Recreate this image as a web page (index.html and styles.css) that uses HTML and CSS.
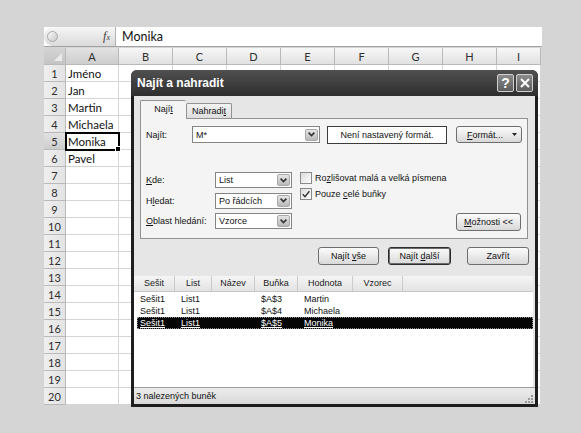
FILE: index.html
```html
<!DOCTYPE html>
<html>
<head>
    <meta charset="UTF-8">
    <title>Najít a nahradit</title>
    <link rel="stylesheet" href="styles.css">
</head>
<body>
    <div class="excel">
        <div class="formula-bar">
            <div class="name-box">
                <span class="knob"></span>
                <span class="fx">f<small>x</small></span>
            </div>
            <div class="formula">Monika</div>
        </div>

        <table class="sheet">
            <colgroup>
                <col class="c-head">
                <col class="c-a">
                <col span="7" class="c-mid">
                <col class="c-i">
            </colgroup>
            <tr class="head-row">
                <th class="corner"></th><th class="sel">A</th><th>B</th><th>C</th><th>D</th><th>E</th><th>F</th><th>G</th><th>H</th><th>I</th>
            </tr>
            <tr><th>1</th><td>Jméno</td><td></td><td></td><td></td><td></td><td></td><td></td><td></td><td></td></tr>
            <tr><th>2</th><td>Jan</td><td></td><td></td><td></td><td></td><td></td><td></td><td></td><td></td></tr>
            <tr><th>3</th><td>Martin</td><td></td><td></td><td></td><td></td><td></td><td></td><td></td><td></td></tr>
            <tr><th>4</th><td>Michaela</td><td></td><td></td><td></td><td></td><td></td><td></td><td></td><td></td></tr>
            <tr><th class="sel">5</th><td class="current-cell">Monika</td><td></td><td></td><td></td><td></td><td></td><td></td><td></td><td></td></tr>
            <tr><th>6</th><td>Pavel</td><td></td><td></td><td></td><td></td><td></td><td></td><td></td><td></td></tr>
            <tr><th>7</th><td></td><td></td><td></td><td></td><td></td><td></td><td></td><td></td><td></td></tr>
            <tr><th>8</th><td></td><td></td><td></td><td></td><td></td><td></td><td></td><td></td><td></td></tr>
            <tr><th>9</th><td></td><td></td><td></td><td></td><td></td><td></td><td></td><td></td><td></td></tr>
            <tr><th>10</th><td></td><td></td><td></td><td></td><td></td><td></td><td></td><td></td><td></td></tr>
            <tr><th>11</th><td></td><td></td><td></td><td></td><td></td><td></td><td></td><td></td><td></td></tr>
            <tr><th>12</th><td></td><td></td><td></td><td></td><td></td><td></td><td></td><td></td><td></td></tr>
            <tr><th>13</th><td></td><td></td><td></td><td></td><td></td><td></td><td></td><td></td><td></td></tr>
            <tr><th>14</th><td></td><td></td><td></td><td></td><td></td><td></td><td></td><td></td><td></td></tr>
            <tr><th>15</th><td></td><td></td><td></td><td></td><td></td><td></td><td></td><td></td><td></td></tr>
            <tr><th>16</th><td></td><td></td><td></td><td></td><td></td><td></td><td></td><td></td><td></td></tr>
            <tr><th>17</th><td></td><td></td><td></td><td></td><td></td><td></td><td></td><td></td><td></td></tr>
            <tr><th>18</th><td></td><td></td><td></td><td></td><td></td><td></td><td></td><td></td><td></td></tr>
            <tr><th>19</th><td></td><td></td><td></td><td></td><td></td><td></td><td></td><td></td><td></td></tr>
            <tr><th>20</th><td></td><td></td><td></td><td></td><td></td><td></td><td></td><td></td><td></td></tr>
        </table>

        <div class="dialog">
            <div class="title-bar">
                <span class="title">Najít a nahradit</span>
                <div class="title-buttons">
                    <span class="tbtn">?</span>
                    <span class="tbtn">
                        <svg width="10" height="10" viewBox="0 0 10 10"><path d="M1 1L9 9M9 1L1 9" stroke="#fff" stroke-width="2"/></svg>
                    </span>
                </div>
            </div>

            <div class="dialog-body">
                <div class="tabs">
                    <span class="tab current">Nají<u>t</u></span>
                    <span class="tab">Nahradi<u>t</u></span>
                </div>

                <div class="panel">
                    <div class="find-row">
                        <label class="find-label">Na<u>j</u>ít:</label>
                        <div class="combo find-input">
                            <span>M*</span>
                            <span class="arrow"><svg width="7" height="5" viewBox="0 0 7 5"><path d="M0.6 0.6L3.5 3.6L6.4 0.6" fill="none" stroke="#333" stroke-width="1.6"/></svg></span>
                        </div>
                        <div class="format-preview">Není nastavený formát.</div>
                        <button class="btn format-btn"><span><u>F</u>ormát...</span><svg width="5" height="3" viewBox="0 0 5 3"><path d="M0 0H5L2.5 3Z" fill="#222"/></svg></button>
                    </div>

                    <div class="options">
                        <div class="option-grid">
                            <label><u>K</u>de:</label>
                            <div class="combo">
                                <span>List</span>
                                <span class="arrow"><svg width="7" height="5" viewBox="0 0 7 5"><path d="M0.6 0.6L3.5 3.6L6.4 0.6" fill="none" stroke="#333" stroke-width="1.6"/></svg></span>
                            </div>
                            <label>H<u>l</u>edat:</label>
                            <div class="combo">
                                <span>Po řádcích</span>
                                <span class="arrow"><svg width="7" height="5" viewBox="0 0 7 5"><path d="M0.6 0.6L3.5 3.6L6.4 0.6" fill="none" stroke="#333" stroke-width="1.6"/></svg></span>
                            </div>
                            <label><u>O</u>blast hledání:</label>
                            <div class="combo">
                                <span>Vzorce</span>
                                <span class="arrow"><svg width="7" height="5" viewBox="0 0 7 5"><path d="M0.6 0.6L3.5 3.6L6.4 0.6" fill="none" stroke="#333" stroke-width="1.6"/></svg></span>
                            </div>
                        </div>

                        <div class="checks">
                            <label class="check"><span class="box"></span><span>Ro<u>z</u>lišovat malá a velká písmena</span></label>
                            <label class="check"><span class="box"><svg width="10" height="10" viewBox="0 0 10 10"><path d="M1.8 5.2L4 7.6L8.4 2.2" fill="none" stroke="#333" stroke-width="1.4"/></svg></span><span>Pouze <u>c</u>elé buňky</span></label>
                        </div>

                        <button class="btn options-btn"><u>M</u>ožnosti &lt;&lt;</button>
                    </div>
                </div>

                <div class="actions">
                    <button class="btn find-all">Najít <u>v</u>še</button>
                    <button class="btn find-next default">Najít <u>d</u>alší</button>
                    <button class="btn close-btn">Zavřít</button>
                </div>

                <div class="results">
                    <div class="results-head">
                        <span>Sešit</span><span>List</span><span>Název</span><span>Buňka</span><span>Hodnota</span><span>Vzorec</span><span></span>
                    </div>
                    <div class="result-row">
                        <span>Sešit1</span><span>List1</span><span></span><span>$A$3</span><span>Martin</span><span></span>
                    </div>
                    <div class="result-row">
                        <span>Sešit1</span><span>List1</span><span></span><span>$A$4</span><span>Michaela</span><span></span>
                    </div>
                    <div class="result-row selected">
                        <span>Sešit1</span><span>List1</span><span></span><span>$A$5</span><span>Monika</span><span></span>
                    </div>
                </div>

                <div class="status">
                    <span>3 nalezených buněk</span>
                    <svg class="grip" width="10" height="10" viewBox="0 0 10 10">
                        <rect x="7" y="1" width="2" height="2" fill="#9a9a9a"/>
                        <rect x="4" y="4" width="2" height="2" fill="#9a9a9a"/>
                        <rect x="7" y="4" width="2" height="2" fill="#9a9a9a"/>
                        <rect x="1" y="7" width="2" height="2" fill="#9a9a9a"/>
                        <rect x="4" y="7" width="2" height="2" fill="#9a9a9a"/>
                        <rect x="7" y="7" width="2" height="2" fill="#9a9a9a"/>
                    </svg>
                </div>
            </div>
        </div>
    </div>
</body>
</html>
```

FILE: styles.css
```css
body {
    width: 581px;
    height: 433px;
    margin: 0;
    overflow: hidden;
    background: #d5d5d5;
    font-family: "Liberation Sans", Arial, sans-serif;
}

.excel {
    position: relative;
    width: 498px;
    margin: 27px 0 0 44px;
    font-family: Lato, "Liberation Sans", sans-serif;
}

/* formula bar */

.formula-bar {
    display: flex;
    height: 19px;
    margin-bottom: 1px;
    background: #fff;
    border-bottom: 1px solid #a2a2a2;
}

.name-box {
    display: flex;
    align-items: center;
    justify-content: space-between;
    width: 72px;
    padding: 0 5px 0 3px;
    box-sizing: border-box;
    background: linear-gradient(#f6f6f6, #dadada);
    border-right: 1px solid #b0b0b0;
    border-radius: 9px 0 0 9px;
}

.knob {
    width: 9px;
    height: 9px;
    border-radius: 50%;
    border: 1px solid #a9a9a9;
    background: linear-gradient(135deg, #fafafa, #c8c8c8);
}

.fx {
    font-family: "Liberation Serif", serif;
    font-style: italic;
    font-size: 12px;
    color: #3a3a3a;
}

.fx small {
    font-size: 8px;
}

.formula {
    padding-left: 6px;
    font-size: 12.5px;
    line-height: 19px;
    color: #111;
}

/* sheet grid */

.sheet {
    width: 497px;
    table-layout: fixed;
    border-collapse: separate;
    border-spacing: 0;
    font-size: 11.5px;
    color: #111;
}

.c-head { width: 22px; }
.c-a { width: 53px; }
.c-mid { width: 54px; }
.c-i { width: 44px; }

.sheet tr {
    height: 17px;
}

.sheet th,
.sheet td {
    padding: 0;
    border-right: 1px solid #d6d6d6;
    border-bottom: 1px solid #d6d6d6;
    line-height: 15px;
    white-space: nowrap;
    overflow: hidden;
}

.sheet td {
    padding-left: 2px;
    background: #fff;
}

.sheet th {
    font-weight: normal;
    font-size: 11px;
    color: #2e2e2e;
    background: linear-gradient(90deg, #efefef, #e3e3e3);
    border-color: #b9b9b9;
}

.head-row th {
    background: linear-gradient(#f7f7f7, #e1e1e1);
}

.sheet th.sel {
    background: linear-gradient(#e2e2e2, #cdcdcd);
}

.head-row th.corner {
    position: relative;
    background: linear-gradient(#d4d4d4, #c4c4c4);
}

.corner::after {
    content: "";
    position: absolute;
    right: 3px;
    bottom: 3px;
    border-left: 8px solid transparent;
    border-bottom: 8px solid #ececec;
}

.sheet td.current-cell {
    position: relative;
    overflow: visible;
    outline: 2px solid #000;
    outline-offset: -1px;
}

.current-cell::after {
    content: "";
    position: absolute;
    right: -3px;
    bottom: -3px;
    width: 4px;
    height: 4px;
    background: #000;
    border: 1px solid #fff;
}

/* dialog */

.dialog {
    position: absolute;
    left: 87px;
    top: 43px;
    width: 407px;
    padding: 0 3px 3px;
    box-sizing: border-box;
    background: #1e1e1e;
    border-radius: 6px 6px 0 0;
    font-family: "Liberation Sans", Arial, sans-serif;
    font-size: 9px;
    color: #111;
}

.title-bar {
    display: flex;
    align-items: center;
    justify-content: space-between;
    height: 26px;
    margin: 0 -3px;
    padding: 0 5px 0 6px;
    background: linear-gradient(#505050, #2e2e2e);
    border-radius: 6px 6px 0 0;
}

.title {
    font-size: 12px;
    font-weight: bold;
    color: #fff;
}

.title-buttons {
    display: flex;
    gap: 2px;
}

.tbtn {
    display: flex;
    align-items: center;
    justify-content: center;
    width: 17px;
    height: 18px;
    box-sizing: border-box;
    border: 1px solid #cfcfcf;
    border-radius: 2px;
    background: linear-gradient(#8c8c8c, #5c5c5c);
    color: #fff;
    font-size: 14px;
    font-weight: bold;
}

.dialog-body {
    display: flex;
    flex-direction: column;
    height: 308px;
    background: #e6e6e6;
}

.tabs {
    display: flex;
    align-items: flex-end;
    height: 17px;
    padding: 5px 0 0 6px;
}

.tab {
    width: 46px;
    height: 15px;
    box-sizing: border-box;
    border: 1px solid #929292;
    border-bottom: none;
    border-radius: 2px 2px 0 0;
    background: linear-gradient(#f2f2f2, #dedede);
    text-align: center;
    line-height: 14px;
}

.tab.current {
    position: relative;
    z-index: 1;
    height: 19px;
    margin-bottom: -1px;
    border-right: none;
    background: #f4f4f4;
    line-height: 17px;
}

.panel {
    width: 388px;
    height: 121px;
    margin-left: 6px;
    padding: 7px 5px 0;
    box-sizing: border-box;
    background: #f4f4f4;
    border: 1px solid #929292;
}

.find-row {
    display: flex;
    align-items: center;
    height: 17px;
}

.find-label {
    width: 46px;
}

.combo {
    display: flex;
    align-items: center;
    justify-content: space-between;
    height: 16px;
    padding: 0 1px 0 3px;
    box-sizing: border-box;
    background: #fff;
    border: 1px solid #858585;
}

.find-input {
    width: 128px;
    height: 17px;
}

.arrow {
    display: flex;
    align-items: center;
    justify-content: center;
    width: 13px;
    height: 12px;
    box-sizing: border-box;
    border: 1px solid #a8a8a8;
    border-radius: 2px;
    background: linear-gradient(#e6e6e6, #b9b9b9);
}

.format-preview {
    width: 120px;
    height: 18px;
    margin-left: 7px;
    box-sizing: border-box;
    border: 1px solid #3c3c3c;
    background: #fff;
    text-align: center;
    line-height: 16px;
}

.btn {
    height: 18px;
    padding: 0;
    box-sizing: border-box;
    border: 1px solid #6e6e6e;
    border-radius: 3px;
    background: linear-gradient(#fbfbfb, #ececec 45%, #d8d8d8);
    font-family: inherit;
    font-size: 9px;
    color: #111;
}

.format-btn {
    display: flex;
    align-items: center;
    justify-content: space-between;
    width: 66px;
    height: 17px;
    margin-left: 9px;
    padding: 0 4px 0 10px;
}

.options {
    display: flex;
    margin-top: 29px;
}

.option-grid {
    display: grid;
    grid-template-columns: 69px 77px;
    grid-auto-rows: 16px;
    row-gap: 4.5px;
    align-items: center;
}

.checks {
    display: flex;
    flex-direction: column;
    gap: 4px;
    margin-left: 8px;
}

.check {
    display: flex;
    align-items: center;
    gap: 3px;
    height: 12px;
}

.box {
    display: flex;
    align-items: center;
    justify-content: center;
    width: 12px;
    height: 12px;
    box-sizing: border-box;
    border: 1px solid #8a8a8a;
    background: linear-gradient(135deg, #dcdcdc, #fdfdfd);
}

.options-btn {
    align-self: flex-end;
    width: 65px;
    margin: 0 1px -2px auto;
}

.actions {
    display: flex;
    justify-content: flex-end;
    height: 18px;
    margin-top: 8px;
    padding-right: 6px;
}

.find-all { width: 61px; }

.find-next {
    width: 63px;
    margin-left: 9px;
}

.btn.default {
    border-color: #2c2c2c;
    box-shadow: inset 0 0 0 1px #6a6a6a;
}

.close-btn {
    width: 62px;
    margin-left: 16px;
}

.results {
    height: 111px;
    margin: 11px 2px 0 0;
    background: #fff;
}

.results-head,
.result-row {
    display: grid;
    grid-template-columns: 41px 37px 43px 43px 55px 50px 1fr;
}

.results-head {
    height: 15px;
    margin-bottom: 1px;
    background: linear-gradient(#f5f5f5, #e3e3e3);
    border-bottom: 1px solid #c6c6c6;
    line-height: 15px;
    text-align: center;
    color: #222;
}

.results-head span {
    border-right: 1px solid #cbcbcb;
}

.results-head span:last-child {
    border-right: none;
}

.result-row {
    grid-template-columns: 38px 37px 43px 43px 55px 1fr;
    height: 12px;
    margin-left: 3px;
    line-height: 12px;
}

.result-row span {
    padding-left: 6px;
    white-space: nowrap;
}

.result-row span:first-child {
    padding-left: 3px;
}

.result-row.selected {
    background: #050505;
    color: #fff;
    outline: 1px dotted #8a8a8a;
    outline-offset: -1px;
}

.result-row.selected span {
    text-decoration: underline;
}

.status {
    display: flex;
    align-items: center;
    justify-content: space-between;
    height: 17px;
    padding: 0 1px 0 2px;
    box-sizing: border-box;
    background: linear-gradient(#ececec, #d9d9d9);
    border-top: 1px solid #9c9c9c;
}

.grip {
    align-self: flex-end;
}
```
